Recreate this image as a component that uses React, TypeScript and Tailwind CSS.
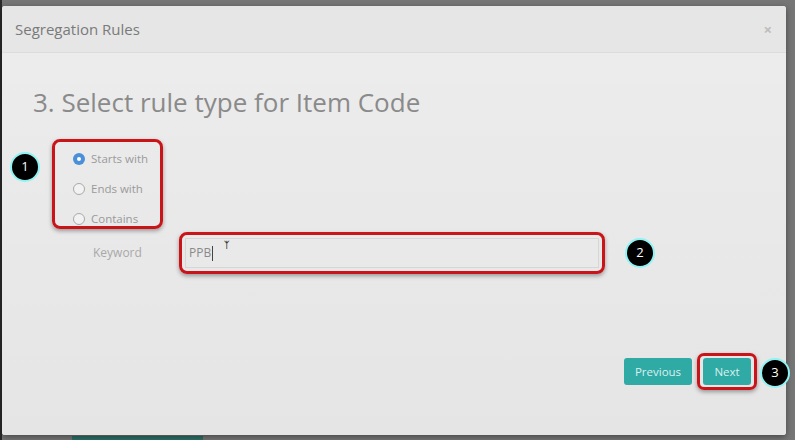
const font = { fontFamily: '"Open Sans", "Noto Sans", sans-serif' };

function Badge({ n }: { n: number }) {
  return (
    <div className="flex size-[30px] items-center justify-center rounded-full border-2 border-[#8ff3f3] bg-black text-[13px] text-white">
      {n}
    </div>
  );
}

function Radio({ label, checked }: { label: string; checked?: boolean }) {
  return (
    <div className="flex h-[16px] items-center gap-[6px]">
      {checked ? (
        <span className="flex size-[12px] items-center justify-center rounded-full bg-[#4a8fd8]">
          <span className="size-[4px] rounded-full bg-white" />
        </span>
      ) : (
        <span className="size-[12px] rounded-full border border-[#a9a9a9] bg-[#f2f2f2]" />
      )}
      <span className="text-[11.5px] leading-[16px] text-[#9a9a9a]">{label}</span>
    </div>
  );
}

export default function App() {
  return (
    <div
      className="relative h-[440px] w-[795px] overflow-hidden bg-[#767676] pl-[2px] pt-[6px]"
      style={font}
    >
      <div className="absolute left-0 top-0 h-full w-[2px] bg-[#2a2a2a]" />
      <div className="absolute bottom-0 left-[72px] h-[4px] w-[131px] bg-[#2f6f68]" />

      <div className="relative flex h-[429px] w-[784px] flex-col overflow-hidden rounded-[3px] bg-[#ebebeb] shadow-[0_2px_6px_rgba(0,0,0,0.4)]">
        <div className="flex h-[47px] shrink-0 items-center justify-between border-b border-[#dcdcdc] bg-[#e6e6e6] pl-[13px] pr-[14px]">
          <span className="pt-px text-[15px] text-[#7a7a7a]">Segregation Rules</span>
          <span className="text-[15px] font-bold text-[#bdbdbd]">×</span>
        </div>

        <div className="flex flex-1 flex-col bg-gradient-to-b from-[#ececec] to-[#e5e5e5] pl-[31px] pt-[31px]">
          <h1 className="shrink-0 text-[26px] leading-[36px] text-[#8a8a8a]">
            3. Select rule type for Item Code
          </h1>

          <div className="ml-[19px] mt-[19px] flex h-[90px] w-[111px] shrink-0 flex-col gap-[14px] rounded-[8px] border-[3px] border-[#c9141a] pl-[18px] pt-[9px] shadow-[0_2px_4px_rgba(0,0,0,0.35)]">
            <Radio label="Starts with" checked />
            <Radio label="Ends with" />
            <Radio label="Contains" />
          </div>

          <div className="mt-[3px] flex shrink-0 items-center">
            <span className="ml-[60px] w-[86px] text-[12px] text-[#a8a8a8]">Keyword</span>
            <div className="rounded-[8px] border-[3px] border-[#c9141a] px-[3px] py-[3px] shadow-[0_2px_4px_rgba(0,0,0,0.35)]">
              <div className="relative flex h-[30px] w-[414px] items-center border border-[#d6d6d6] bg-[#e9e9e9] pl-[3px] text-[12px] text-[#8a8a8a]">
                PPB
                <span className="ml-px h-[15px] w-px bg-[#444]" />
                <span className="absolute left-[38px] top-[-1px] text-[9px] font-bold text-[#333]">
                  ᛉ
                </span>
              </div>
            </div>
            <div className="ml-[20px]">
              <Badge n={2} />
            </div>
          </div>

          <div className="mt-auto mb-[45px] flex items-center justify-end gap-[5px] pr-[29px]">
            <button className="h-[27px] w-[68px] rounded-[3px] bg-[#30aaa5] text-[11.5px] text-[#d9f1ef]">
              Previous
            </button>
            <div className="rounded-[7px] border-[3px] border-[#c9141a] px-[3px] py-[2px] shadow-[0_2px_4px_rgba(0,0,0,0.35)]">
              <button className="h-[27px] w-[48px] rounded-[3px] bg-[#30aaa5] text-[11.5px] text-[#d9f1ef]">
                Next
              </button>
            </div>
          </div>
        </div>
      </div>

      <div className="absolute left-[10px] top-[152px]">
        <Badge n={1} />
      </div>
      <div className="absolute left-[760px] top-[358px]">
        <Badge n={3} />
      </div>
    </div>
  );
}
